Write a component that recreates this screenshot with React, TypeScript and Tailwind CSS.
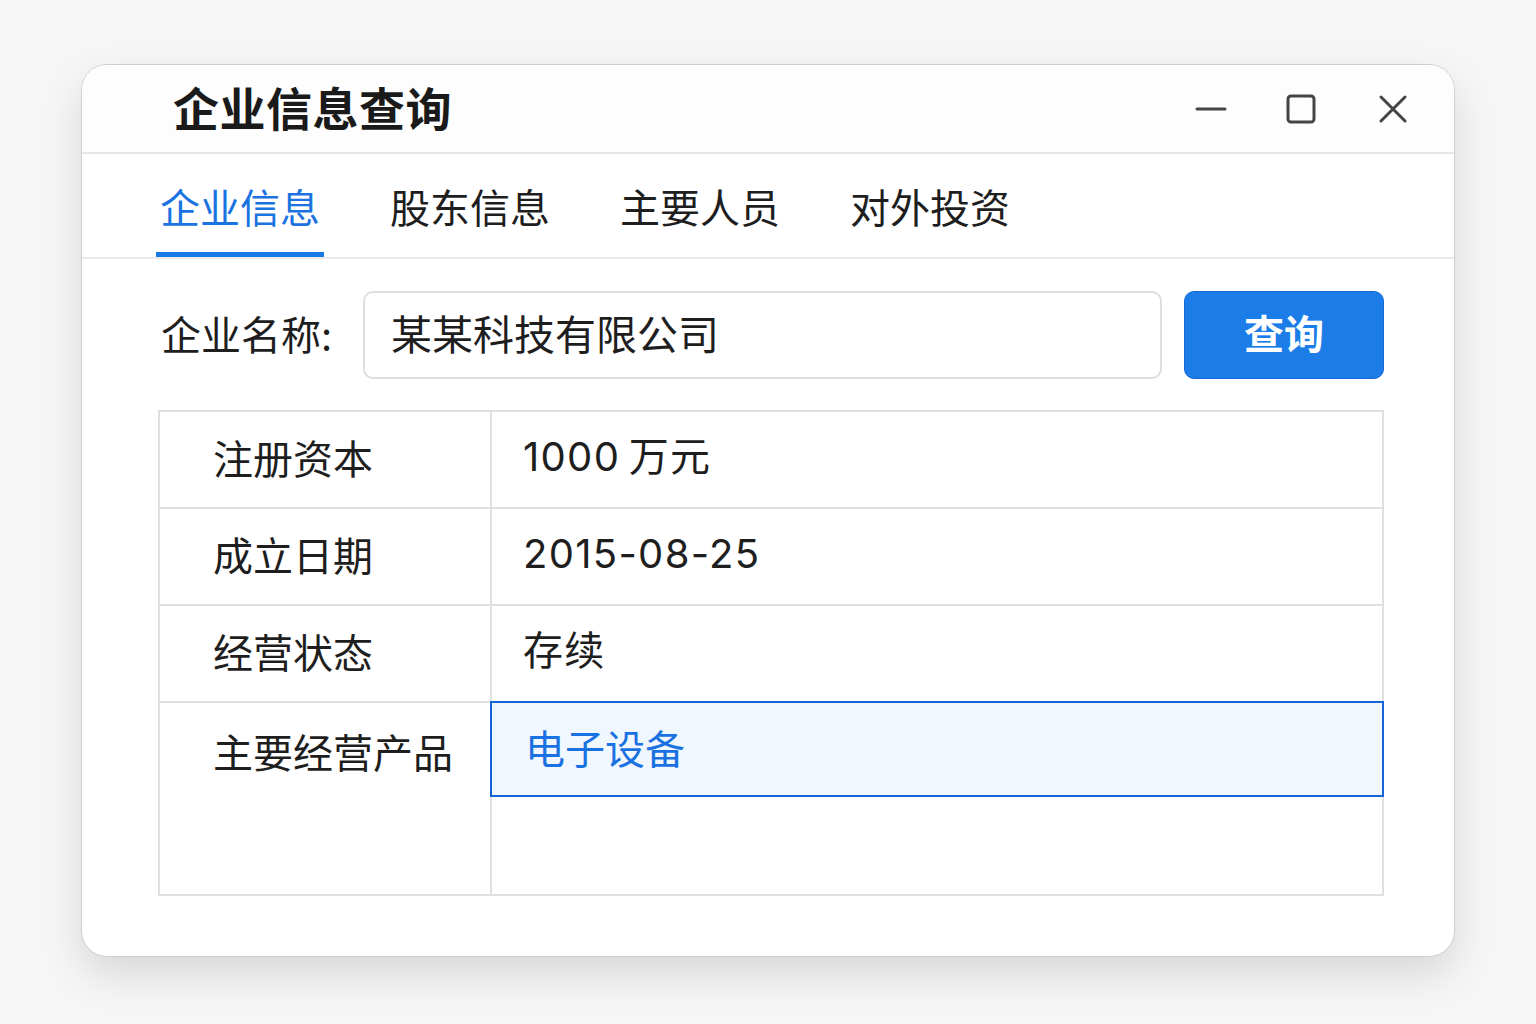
import React from "react";

const font = { fontFamily: '"Noto Sans CJK SC", "Noto Sans", sans-serif' };
const numFont = { fontFamily: 'Inter, "Noto Sans CJK SC", sans-serif' };

const tabs = ["企业信息", "股东信息", "主要人员", "对外投资"];

const rows: { label: string; value: string }[] = [
  { label: "注册资本", value: "1000\u2009万元" },
  { label: "成立日期", value: "2015-08-25" },
  { label: "经营状态", value: "存续" },
];

function WindowControls() {
  return (
    <div className="flex items-center">
      <svg width="34" height="34" viewBox="0 0 34 34" className="mr-[56px]">
        <line x1="3" y1="17" x2="31" y2="17" stroke="#444" strokeWidth="3" strokeLinecap="round" />
      </svg>
      <svg width="34" height="34" viewBox="0 0 34 34" className="mr-[58px]">
        <rect x="4" y="4" width="26" height="26" rx="3" fill="none" stroke="#444" strokeWidth="3" />
      </svg>
      <svg width="34" height="34" viewBox="0 0 34 34">
        <path d="M5 5 L29 29 M29 5 L5 29" stroke="#444" strokeWidth="3" strokeLinecap="round" />
      </svg>
    </div>
  );
}

export default function App() {
  return (
    <div className="min-h-screen bg-[#f6f6f6] pt-[64px] pl-[81px]" style={font}>
      <div className="w-[1374px] h-[893px] rounded-[26px] border border-[#cfcfcf] bg-white shadow-[0_18px_40px_rgba(0,0,0,0.12)] overflow-hidden flex flex-col">
        <div className="h-[89px] flex items-center justify-between pl-[91px] pr-[44px] border-b-2 border-[#e6e6e6] bg-[#fdfdfd]">
          <h1 className="text-[46px] font-bold text-[#1a1a1a] leading-none tracking-[0.5px] -mt-[6px]">企业信息查询</h1>
          <WindowControls />
        </div>

        <div className="h-[105px] flex items-end pl-[74px] gap-[62px] border-b-2 border-[#ebebeb]">
          {tabs.map((t, i) => (
            <div
              key={t}
              className={`h-full flex items-center px-1 border-b-[5px] ${
                i === 0 ? "border-[#1b7be6] text-[#1a73e0]" : "border-transparent text-[#1e1e1e]"
              }`}
            >
              <span className="text-[40px] leading-none pt-[6px]">{t}</span>
            </div>
          ))}
        </div>

        <div className="pl-[76px] pr-[70px] pt-[32px]">
          <div className="flex items-center h-[88px]">
            <span className="text-[40px] text-[#1e1e1e] w-[205px] pl-[3px] -mt-[4px]">企业名称:</span>
            <div className="flex-1 h-full rounded-[10px] border-2 border-[#dedede] flex items-center pl-[26px]">
              <span className="text-[41px] text-[#1e1e1e] -mt-[4px]">某某科技有限公司</span>
            </div>
            <button className="ml-[22px] w-[200px] h-full rounded-[10px] bg-[#1d7de8] border border-[#1568d4] text-white text-[40px] font-bold">
              <span className="relative -top-[3px]">查询</span>
            </button>
          </div>

          <div className="mt-[31px] border-2 border-[#e0e0e0] grid grid-cols-[332px_1fr]">
            {rows.map((r) => (
              <React.Fragment key={r.label}>
                <div className="h-[97px] border-b-2 border-r-2 border-[#e0e0e0] flex items-center pl-[53px]">
                  <span className="text-[40px] text-[#1e1e1e] -mt-[6px]">{r.label}</span>
                </div>
                <div className="h-[97px] border-b-2 border-[#e0e0e0] flex items-center pl-[31px]">
                  <span className="text-[40px] text-[#1e1e1e] -mt-[6px] tracking-[1.3px]" style={numFont}>
                    {r.value}
                  </span>
                </div>
              </React.Fragment>
            ))}
            <div className="row-span-2 h-[191px] border-r-2 border-[#e0e0e0] pl-[53px] pt-[18px]">
              <span className="text-[40px] text-[#1e1e1e]">主要经营产品</span>
            </div>
            <div className="h-[96px] -mt-[2px] -ml-[2px] -mr-[2px] border-2 border-[#1565d8] bg-[#f1f7fe] flex items-center pl-[33px]">
              <span className="text-[40px] text-[#1a72e2] -mt-[4px]">电子设备</span>
            </div>
            <div className="h-[95px]" />
          </div>
        </div>
      </div>
    </div>
  );
}
